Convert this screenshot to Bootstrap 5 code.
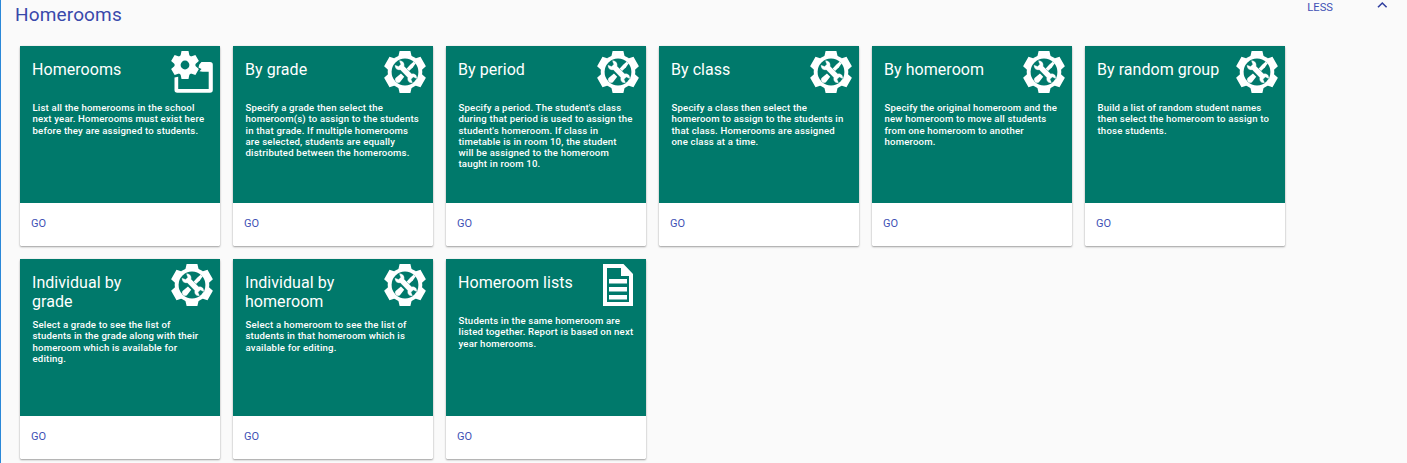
<!DOCTYPE html>
<html lang="en">
<head>
<meta charset="utf-8">
<meta name="viewport" content="width=device-width, initial-scale=1">
<title>Homerooms</title>
<link href="https://cdn.jsdelivr.net/npm/bootstrap@5.3.0/dist/css/bootstrap.min.css" rel="stylesheet">
<style>
  body { font-family: Roboto, "Liberation Sans", sans-serif; background: #fafafa; height: 463px; overflow: hidden; }
  .panel { border-left: 1px solid #2b88d8; height: 463px; overflow: hidden; }
  .panel-head { height: 46px; color: #3f51b5; padding: 0 19px 0 14px; }
  .panel-title { font-size: 19px; line-height: 29px; font-weight: 400; color: #3949ab; letter-spacing: .15px; }
  .toggle { font-size: 11.2px; line-height: 15px; color: #3f51b5; gap: 43px; }
  .tiles { gap: 13px; padding-left: 19px; width: 1300px; }
  .tile { width: 200px; height: 200px; border: 0; border-radius: 1.5px; background: #fff; box-shadow: 0 1px 2px rgba(0,0,0,.36), 0 0 1px rgba(0,0,0,.16); }
  .tile-top { height: 156.5px; background: #00796b; color: #fff; padding: 14px 0 0 12px; }
  .tile-title { font-size: 16px; line-height: 19px; font-weight: 400; width: 133px; white-space: nowrap; letter-spacing: .05px; min-height: 19px; }
  .tile-text { font-size: 9.6px; line-height: 11.25px; font-weight: 500; white-space: nowrap; letter-spacing: .18px; margin: 23px 0 0 .5px; }
  .tile-text.near { margin-top: 8px; }
  .tile-icon { top: 5px; right: 7px; width: 42px; height: 42px; }
  .tile-go { font-size: 11px; line-height: 15px; color: #3f51b5; padding: 13px 0 0 11px; }
</style>
</head>
<body>
<svg class="d-none" xmlns="http://www.w3.org/2000/svg">
  <symbol id="tools" viewBox="0 0 42 42">
    <g fill="#fff">
      <circle cx="21" cy="21" r="17.300"/>
      <g id="pair"><path d="M15.600 0h10.800l1.600 7H14zM15.600 42h10.800l1.600-7H14z"/></g>
      <use href="#pair" transform="rotate(60 21 21)"/>
      <use href="#pair" transform="rotate(120 21 21)"/>
    </g>
    <circle cx="21" cy="21" r="13.400" fill="#00796b"/>
    <g transform="translate(21 21) scale(1.150) translate(-21 -20.800)" fill="#fff">
      <path d="M28.500 11.800l1.700 1.700-2.200 3.200-6.500 6-1.800-1.800 6-6.600z"/>
      <path d="M12.800 26l4.700-3.800 2.800 2.800-3.700 4.700c-2.500 1.500-5.200-1.200-3.800-3.700z"/>
      <path d="M12.200 14.500l3.200 1.300 1.700-1.700-1.300-3.200c2.900-.4 5.200 1.800 4.600 4.900l6.300 6.400c3-.6 5.200 1.500 4.700 4.600l-3.200-1.400-1.700 1.700 1.300 3.200c-3 .4-5.200-1.800-4.600-4.800l-6.300-6.400c-2.900.6-5.100-1.600-4.700-4.600z" stroke="#00796b" stroke-width=".3"/>
    </g>
  </symbol>
  <symbol id="setup" viewBox="0 0 42 42">
    <path d="M28.300 13.500l2.200-2.500H39q2.800 0 2.800 2.800V39q0 2.800-2.800 2.800H6.300Q3.500 41.800 3.500 39V26.500l3.700-.7V38h30.500V20.800h-6.200l-3-.6 2-2.200-3-1.500z" fill="#fff"/>
    <g fill="#fff">
      <circle cx="14" cy="14" r="10.500"/>
      <g id="cog"><path d="M10.500 0h7l1.200 6H9.300zM10.500 28h7l1.200-6H9.300z"/></g>
      <use href="#cog" transform="rotate(60 14 14)"/>
      <use href="#cog" transform="rotate(120 14 14)"/>
    </g>
    <circle cx="14" cy="14" r="4.400" fill="#00796b"/>
  </symbol>
  <symbol id="report" viewBox="0 0 42 42">
    <path fill="#fff" fill-rule="evenodd" d="M6 0h20.500L36 10v32H6zM10 4v34h22V12h-8V4z"/>
    <path fill="#fff" d="M12 15h18v4.500H12zM12 23h18v4.500H12zM12 31h18v4.500H12z"/>
  </symbol>
</svg>

<main class="panel">
  <header class="panel-head d-flex justify-content-between align-items-start">
    <h1 class="panel-title mb-0">Homerooms</h1>
    <div class="toggle d-flex">
      <span>LESS</span>
      <svg width="12" height="12" viewBox="0 0 12 12" fill="none" stroke="#303f9f" stroke-width="1.600"><path d="M2 7.200L6.300 3l4.300 4.200"/></svg>
    </div>
  </header>

  <section class="tiles d-flex flex-wrap">
    <article class="tile">
      <div class="tile-top position-relative">
        <h2 class="tile-title mb-0">Homerooms</h2>
        <svg class="tile-icon position-absolute"><use href="#setup"/></svg>
        <p class="tile-text">List all the homerooms in the school<br>next year. Homerooms must exist here<br>before they are assigned to students.</p>
      </div>
      <div class="tile-go">GO</div>
    </article>
    <article class="tile">
      <div class="tile-top position-relative">
        <h2 class="tile-title mb-0">By grade</h2>
        <svg class="tile-icon position-absolute"><use href="#tools"/></svg>
        <p class="tile-text">Specify a grade then select the<br>homeroom(s) to assign to the students<br>in that grade. If multiple homerooms<br>are selected, students are equally<br>distributed between the homerooms.</p>
      </div>
      <div class="tile-go">GO</div>
    </article>
    <article class="tile">
      <div class="tile-top position-relative">
        <h2 class="tile-title mb-0">By period</h2>
        <svg class="tile-icon position-absolute"><use href="#tools"/></svg>
        <p class="tile-text">Specify a period. The student's class<br>during that period is used to assign the<br>student's homeroom. If class in<br>timetable is in room 10, the student<br>will be assigned to the homeroom<br>taught in room 10.</p>
      </div>
      <div class="tile-go">GO</div>
    </article>
    <article class="tile">
      <div class="tile-top position-relative">
        <h2 class="tile-title mb-0">By class</h2>
        <svg class="tile-icon position-absolute"><use href="#tools"/></svg>
        <p class="tile-text">Specify a class then select the<br>homeroom to assign to the students in<br>that class. Homerooms are assigned<br>one class at a time.</p>
      </div>
      <div class="tile-go">GO</div>
    </article>
    <article class="tile">
      <div class="tile-top position-relative">
        <h2 class="tile-title mb-0">By homeroom</h2>
        <svg class="tile-icon position-absolute"><use href="#tools"/></svg>
        <p class="tile-text">Specify the original homeroom and the<br>new homeroom to move all students<br>from one homeroom to another<br>homeroom.</p>
      </div>
      <div class="tile-go">GO</div>
    </article>
    <article class="tile">
      <div class="tile-top position-relative">
        <h2 class="tile-title mb-0">By random group</h2>
        <svg class="tile-icon position-absolute"><use href="#tools"/></svg>
        <p class="tile-text">Build a list of random student names<br>then select the homeroom to assign to<br>those students.</p>
      </div>
      <div class="tile-go">GO</div>
    </article>
    <article class="tile">
      <div class="tile-top position-relative">
        <h2 class="tile-title mb-0">Individual by<br>grade</h2>
        <svg class="tile-icon position-absolute"><use href="#tools"/></svg>
        <p class="tile-text near">Select a grade to see the list of<br>students in the grade along with their<br>homeroom which is available for<br>editing.</p>
      </div>
      <div class="tile-go">GO</div>
    </article>
    <article class="tile">
      <div class="tile-top position-relative">
        <h2 class="tile-title mb-0">Individual by<br>homeroom</h2>
        <svg class="tile-icon position-absolute"><use href="#tools"/></svg>
        <p class="tile-text near">Select a homeroom to see the list of<br>students in that homeroom which is<br>available for editing.</p>
      </div>
      <div class="tile-go">GO</div>
    </article>
    <article class="tile">
      <div class="tile-top position-relative">
        <h2 class="tile-title mb-0">Homeroom lists</h2>
        <svg class="tile-icon position-absolute"><use href="#report"/></svg>
        <p class="tile-text">Students in the same homeroom are<br>listed together. Report is based on next<br>year homerooms.</p>
      </div>
      <div class="tile-go">GO</div>
    </article>
  </section>
</main>
<script src="https://cdn.jsdelivr.net/npm/bootstrap@5.3.0/dist/js/bootstrap.bundle.min.js"></script>
</body>
</html>
